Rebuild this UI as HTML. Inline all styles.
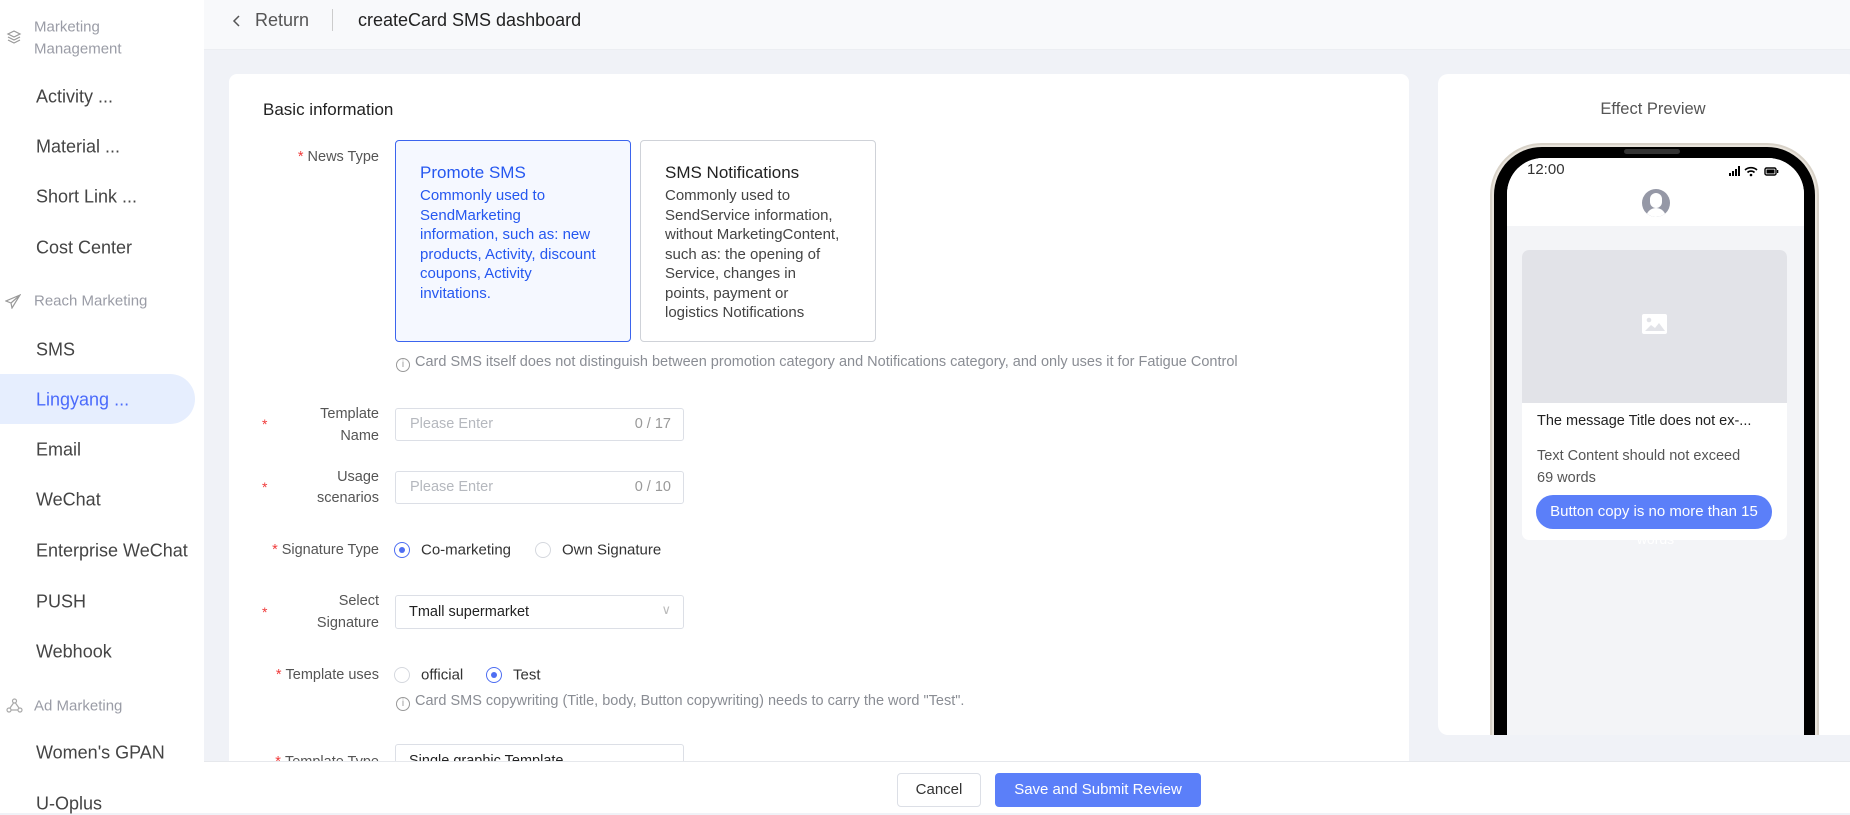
<!DOCTYPE html>
<html><head><meta charset="utf-8"><style>
*{box-sizing:border-box;margin:0;padding:0}
body{width:1850px;height:813px;overflow:hidden;background:#f0f2f7;font-family:"Liberation Sans",sans-serif;color:#333;position:relative}
.a{position:absolute;white-space:nowrap}
.side{position:absolute;left:0;top:0;width:204px;height:813px;background:#fff}
.si{position:absolute;left:36px;font-size:18px;color:#444;transform:translateY(-50%)}
.sg{position:absolute;left:34px;font-size:15px;color:#9a9ca6;transform:translateY(-50%)}
.lab{position:absolute;right:1471px;font-size:14.5px;color:#555;text-align:right;transform:translateY(-50%)}
.star{color:#f03b3b;margin-right:4px}
.rs{position:absolute;color:#f03b3b;font-size:14px;left:262px;transform:translateY(-50%)}
.inp{position:absolute;left:395px;width:289px;height:33px;border:1px solid #dcdfe6;border-radius:3px;background:#fff;font-size:14.5px}
.radio{position:absolute;width:16px;height:16px;border-radius:50%;border:1px solid #d5d8de;background:#fff;transform:translateY(-50%)}
.radio.on{border-color:#4e6ef2}
.radio.on:after{content:"";position:absolute;left:4px;top:4px;width:6px;height:6px;border-radius:50%;background:#4e6ef2}
.rt{position:absolute;font-size:15px;color:#333;transform:translateY(-50%)}
.hint{position:absolute;font-size:14.5px;color:#8a8d94;transform:translateY(-50%)}
.ic{display:inline-block;width:14px;height:14px;border:1px solid #999;border-radius:50%;font-size:10px;line-height:12px;text-align:center;margin-right:5px;vertical-align:-1px;color:#999}
.cd{font-size:15px;line-height:19.5px;width:178px;white-space:normal}
</style></head><body>
<div class="side">
<svg class="a" style="left:6px;top:29px" width="16" height="16" viewBox="0 0 16 16" fill="none" stroke="#999" stroke-width="1.2"><path d="M8 2 14 5 8 8 2 5Z"/><path d="M2 8l6 3 6-3M2 11l6 3 6-3"/></svg>
<div class="sg" style="top:27px">Marketing</div>
<div class="sg" style="top:49px">Management</div>
<div class="si" style="top:97px">Activity ...</div>
<div class="si" style="top:147px">Material ...</div>
<div class="si" style="top:197px">Short Link ...</div>
<div class="si" style="top:248px">Cost Center</div>
<svg class="a" style="left:5px;top:293px" width="16" height="16" viewBox="0 0 16 16" fill="none" stroke="#999" stroke-width="1.2"><path d="M15 2 1 8l5 2 1 5 8-13ZM6 10l9-8"/></svg>
<div class="sg" style="top:301px">Reach Marketing</div>
<div class="si" style="top:350px">SMS</div>
<div class="a" style="left:0;top:374px;width:195px;height:50px;background:#e6eefe;border-radius:0 25px 25px 0"></div>
<div class="si" style="top:400px;color:#4b6bfb">Lingyang ...</div>
<div class="si" style="top:450px">Email</div>
<div class="si" style="top:500px">WeChat</div>
<div class="si" style="top:551px">Enterprise WeChat</div>
<div class="si" style="top:602px">PUSH</div>
<div class="si" style="top:652px">Webhook</div>
<svg class="a" style="left:6px;top:698px" width="17" height="16" viewBox="0 0 17 16" fill="none" stroke="#aaa" stroke-width="1.2"><circle cx="8.5" cy="3" r="2"/><circle cx="3" cy="12" r="2"/><circle cx="14" cy="12" r="2"/><path d="M7.5 5 4 10M9.5 5 13 10M5 12h7"/></svg>
<div class="sg" style="top:706px">Ad Marketing</div>
<div class="si" style="top:753px">Women's GPAN</div>
<div class="si" style="top:804px">U-Oplus</div>
</div>

<div class="a" style="left:204px;top:0;width:1646px;height:50px;background:#f8f9fb;border-bottom:1px solid #eceef2"></div>
<svg class="a" style="left:232px;top:14px" width="10" height="14" viewBox="0 0 10 14" fill="none" stroke="#555" stroke-width="1.5"><path d="M7 2 2 7l5 5"/></svg>
<div class="a" style="left:255px;top:10px;font-size:18px;color:#555">Return</div>
<div class="a" style="left:332px;top:9px;width:1px;height:22px;background:#ccc"></div>
<div class="a" style="left:358px;top:10px;font-size:18px;color:#222">createCard SMS dashboard</div>

<div class="a" style="left:229px;top:74px;width:1180px;height:700px;background:#fff;border-radius:8px"></div>
<div class="a" style="left:263px;top:100px;font-size:17px;color:#222">Basic information</div>

<div class="lab" style="top:157px"><span class="star">*</span>News Type</div>
<div class="a" style="left:395px;top:140px;width:236px;height:202px;border:1px solid #3b64ee;border-radius:4px;background:#f5f8ff;white-space:normal;padding:22px 10px 0 24px;color:#2557f0">
<div style="font-size:17px;margin-bottom:3px">Promote SMS</div>
<div class="cd">Commonly used to SendMarketing information, such as: new products, Activity, discount coupons, Activity invitations.</div></div>
<div class="a" style="left:640px;top:140px;width:236px;height:202px;border:1px solid #cfd2d8;border-radius:4px;background:#fff;white-space:normal;padding:22px 10px 0 24px;color:#333">
<div style="font-size:17px;margin-bottom:3px;color:#222">SMS Notifications</div>
<div class="cd" style="color:#444">Commonly used to SendService information, without MarketingContent, such as: the opening of Service, changes in points, payment or logistics Notifications</div></div>
<div class="hint" style="left:396px;top:363px"><span class="ic">i</span>Card SMS itself does not distinguish between promotion category and Notifications category, and only uses it for Fatigue Control</div>

<div class="rs" style="top:424px">*</div>
<div class="lab" style="top:414px">Template</div><div class="lab" style="top:436px">Name</div>
<div class="inp" style="top:408px"><span class="a" style="left:14px;top:7px;color:#b5b8be">Please Enter</span><span class="a" style="right:12px;top:7px;color:#999">0 / 17</span></div>
<div class="rs" style="top:487px">*</div>
<div class="lab" style="top:477px">Usage</div><div class="lab" style="top:498px">scenarios</div>
<div class="inp" style="top:471px"><span class="a" style="left:14px;top:7px;color:#b5b8be">Please Enter</span><span class="a" style="right:12px;top:7px;color:#999">0 / 10</span></div>

<div class="lab" style="top:550px"><span class="star">*</span>Signature Type</div>
<div class="radio on" style="left:394px;top:550px"></div><div class="rt" style="left:421px;top:550px">Co-marketing</div>
<div class="radio" style="left:535px;top:550px"></div><div class="rt" style="left:562px;top:550px">Own Signature</div>

<div class="rs" style="top:612px">*</div>
<div class="lab" style="top:601px">Select</div><div class="lab" style="top:623px">Signature</div>
<div class="inp" style="top:595px;height:34px"><span class="a" style="left:13px;top:8px;color:#222">Tmall supermarket</span><span class="a" style="right:12px;top:6px;color:#bbb;font-size:13px">&#8744;</span></div>

<div class="lab" style="top:675px"><span class="star">*</span>Template uses</div>
<div class="radio" style="left:394px;top:675px"></div><div class="rt" style="left:421px;top:675px">official</div>
<div class="radio on" style="left:486px;top:675px"></div><div class="rt" style="left:513px;top:675px">Test</div>
<div class="hint" style="left:396px;top:702px"><span class="ic">i</span>Card SMS copywriting (Title, body, Button copywriting) needs to carry the word "Test".</div>
<div class="lab" style="top:762px"><span class="star">*</span>Template Type</div>
<div class="inp" style="top:744px"><span class="a" style="left:13px;top:8px;color:#222">Single graphic Template</span></div>

<div class="a" style="left:1438px;top:74px;width:420px;height:661px;background:#fff;border-radius:10px;overflow:hidden">
<div class="a" style="left:0;width:430px;text-align:center;top:26px;font-size:16.5px;color:#555">Effect Preview</div>
<div class="a" style="left:52px;top:69px;width:329px;height:640px;border-radius:52px 52px 0 0;background:#e9e4dc;border:2px solid #d8d2c8"></div>
<div class="a" style="left:56px;top:73px;width:321px;height:640px;border-radius:48px 48px 0 0;background:#000"></div>
<div class="a" style="left:186px;top:75px;width:56px;height:5px;border-radius:3px;background:#333"></div>
<div class="a" style="left:69px;top:84px;width:297px;height:640px;border-radius:36px 36px 0 0;background:#f3f4f7;overflow:hidden">
<div class="a" style="left:0;top:0;width:297px;height:68px;background:#fff"></div>
<div class="a" style="left:20px;top:3px;font-size:15px;color:#333">12:00</div>
<svg class="a" style="left:222px;top:7px" width="60" height="12" viewBox="0 0 60 12"><rect x="0" y="8" width="2" height="3"/><rect x="3" y="6" width="2" height="5"/><rect x="6" y="4" width="2" height="7"/><rect x="9" y="1" width="2" height="10"/><path d="M16 5a9 9 0 0 1 12 0M18.5 7.5a5 5 0 0 1 7 0" stroke="#000" stroke-width="1.6" fill="none"/><circle cx="22" cy="10" r="1.3"/><rect x="36" y="3" width="11" height="7" rx="1.5" fill="none" stroke="#000" stroke-width="1.4"/><rect x="37.5" y="4.5" width="8" height="4"/><rect x="48" y="5" width="1.3" height="3"/></svg>
<div class="a" style="left:135px;top:31px;width:28px;height:28px;border-radius:50%;background:#9598a6;overflow:hidden"><div class="a" style="left:8px;top:4px;width:12px;height:15px;border-radius:6px;background:#fff"></div><div class="a" style="left:4px;top:19px;width:20px;height:14px;border-radius:10px 10px 0 0;background:#fff"></div></div>
<div class="a" style="left:15px;top:92px;width:265px;height:290px;background:#fff;border-radius:7px;overflow:hidden">
<div class="a" style="left:0;top:0;width:265px;height:153px;background:#e2e3e8"></div>
<svg class="a" style="left:120px;top:64px" width="25" height="20" viewBox="0 0 25 20"><rect width="25" height="20" rx="2" fill="#fff"/><circle cx="7" cy="6" r="2.3" fill="#e2e3e8"/><path d="M3 17l6-6 4 3 4-5 6 8z" fill="#e2e3e8"/></svg>
<div class="a" style="left:15px;top:163px;font-size:14.5px;color:#222">The message Title does not ex-...</div>
<div class="a" style="left:15px;top:195px;font-size:14.5px;color:#555;line-height:22px;white-space:normal;width:215px">Text Content should not exceed 69 words</div>
<div class="a" style="left:14px;top:245px;width:236px;height:34px;border-radius:17px;background:#5b7ff9;color:#fff;font-size:15px;line-height:34px;text-align:center;overflow:hidden">Button copy is no more than 15</div>
</div>
<div class="a" style="left:0;width:297px;text-align:center;top:373px;font-size:14px;color:#fff">words</div>
</div>
</div>

<div class="a" style="left:204px;top:761px;width:1646px;height:52px;background:#fff;border-top:1px solid #e6e8ec"></div>
<div class="a" style="left:897px;top:773px;width:84px;height:34px;border:1px solid #dcdfe6;border-radius:4px;background:#fff;font-size:15px;line-height:32px;text-align:center;color:#333">Cancel</div>
<div class="a" style="left:995px;top:773px;width:206px;height:34px;border-radius:4px;background:#5b7ff9;font-size:15px;line-height:34px;text-align:center;color:#fff">Save and Submit Review</div>
</body></html>
